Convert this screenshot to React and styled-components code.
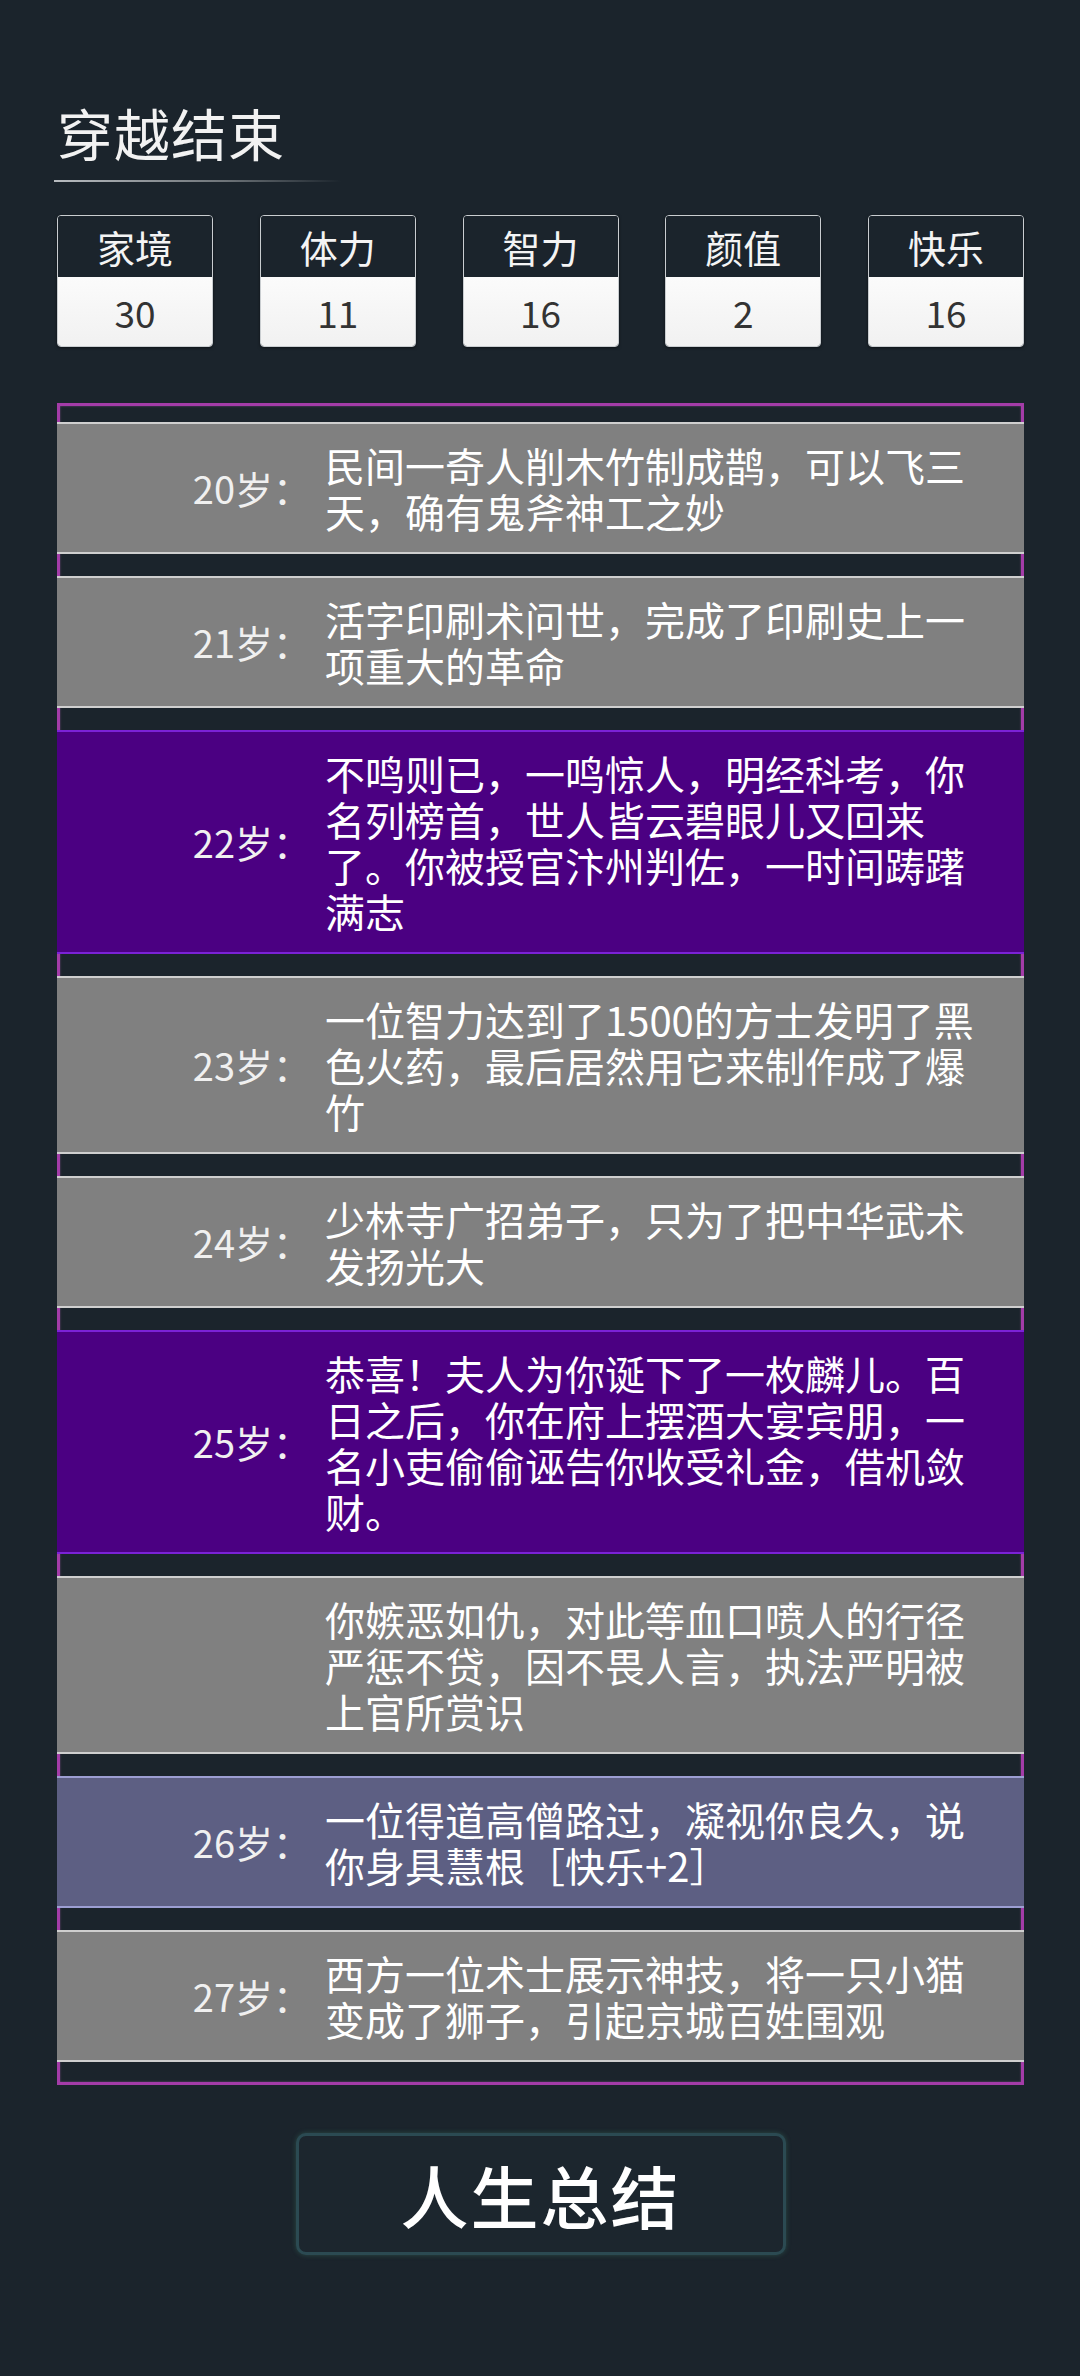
import React from 'react';
import styled, { createGlobalStyle } from 'styled-components';

const GlobalStyle = createGlobalStyle`
  html, body {
    margin: 0;
    padding: 0;
    background: #1b242c;
  }
  body {
    font-family: "Noto Sans CJK SC", "Noto Sans", sans-serif;
    color: #fff;
  }
`;

const Page = styled.div`
  min-height: 2376px;
  box-sizing: border-box;
  padding: 104px 56px 0 57px;
  display: flex;
  flex-direction: column;
`;

const Title = styled.h1`
  margin: 0;
  font-size: 56px;
  line-height: 1;
  font-weight: 400;
  color: #f2f2f2;
  letter-spacing: 1px;
`;

const TitleLine = styled.div`
  margin: 20px 0 0 -3px;
  width: 287px;
  height: 2px;
  background: linear-gradient(90deg, #b8bcc0 0%, #6d7378 60%, rgba(27, 36, 44, 0) 100%);
`;

const Stats = styled.div`
  margin-top: 33px;
  display: flex;
  justify-content: space-between;
`;

const StatCard = styled.div`
  width: 156px;
  height: 132px;
  box-sizing: border-box;
  border: 1.5px solid #c9cdd0;
  border-radius: 4px;
  overflow: hidden;
  display: flex;
  flex-direction: column;
  box-shadow: 0 1px 3px rgba(0, 0, 0, 0.5);
`;

const StatLabel = styled.div`
  height: 61px;
  display: flex;
  align-items: center;
  justify-content: center;
  background: #1b242c;
  color: #f4f4f4;
  font-size: 38px;
`;

const StatValue = styled.div`
  flex: 1;
  display: flex;
  align-items: center;
  justify-content: center;
  background: linear-gradient(180deg, #fbfbfb, #f1f1f1);
  color: #333;
  font-size: 37px;
`;

const List = styled.div`
  margin-top: 56px;
  border: 3px solid #a43ca8;
  box-shadow: inset 0 0 2px rgba(220, 120, 220, 0.5);
  padding: 16px 0 20px;
  display: flex;
  flex-direction: column;
  gap: 22px;
`;

const tones = {
  normal: { bg: '#808080', edge: '#cfcfcf' },
  rare: { bg: '#4b0082', edge: '#7b22d6' },
  good: { bg: '#5d5f83', edge: '#9c9ed2' },
};

const Item = styled.div`
  margin: 0 -3px;
  display: flex;
  align-items: center;
  padding: 18px 0;
  background: ${(p) => tones[p.$tone].bg};
  border-top: 2px solid ${(p) => tones[p.$tone].edge};
  border-bottom: 2px solid ${(p) => tones[p.$tone].edge};
`;

const Age = styled.div`
  flex: 0 0 254px;
  text-align: right;
  font-size: 38px;
  line-height: 46px;
  color: #f0f0f0;
  white-space: nowrap;
`;

const Text = styled.div`
  margin-left: 14px;
  width: 655px;
  font-size: 40px;
  line-height: 46px;
  color: #fff;
  line-break: strict;
`;

const Summary = styled.button`
  align-self: center;
  margin-top: 48px;
  width: 490px;
  height: 122px;
  box-sizing: border-box;
  background: #1c262e;
  border: 3px solid #2b4a52;
  border-radius: 10px;
  box-shadow: 0 0 5px rgba(70, 150, 120, 0.35);
  color: #fff;
  font-family: "Noto Sans CJK SC", sans-serif;
  font-size: 68px;
  font-weight: 500;
  letter-spacing: 2px;
  cursor: pointer;
`;

const stats = [
  { label: '家境', value: 30 },
  { label: '体力', value: 11 },
  { label: '智力', value: 16 },
  { label: '颜值', value: 2 },
  { label: '快乐', value: 16 },
];

const events = [
  { age: 20, tone: 'normal', text: '民间一奇人削木竹制成鹊，可以飞三天，确有鬼斧神工之妙' },
  { age: 21, tone: 'normal', text: '活字印刷术问世，完成了印刷史上一项重大的革命' },
  { age: 22, tone: 'rare', text: '不鸣则已，一鸣惊人，明经科考，你名列榜首，世人皆云碧眼儿又回来了。你被授官汴州判佐，一时间踌躇满志' },
  { age: 23, tone: 'normal', text: '一位智力达到了1500的方士发明了黑色火药，最后居然用它来制作成了爆竹' },
  { age: 24, tone: 'normal', text: '少林寺广招弟子，只为了把中华武术发扬光大' },
  { age: 25, tone: 'rare', text: '恭喜！夫人为你诞下了一枚麟儿。百日之后，你在府上摆酒大宴宾朋，一名小吏偷偷诬告你收受礼金，借机敛财。' },
  { age: null, tone: 'normal', text: '你嫉恶如仇，对此等血口喷人的行径严惩不贷，因不畏人言，执法严明被上官所赏识' },
  { age: 26, tone: 'good', text: '一位得道高僧路过，凝视你良久，说你身具慧根［快乐+2］' },
  { age: 27, tone: 'normal', text: '西方一位术士展示神技，将一只小猫变成了狮子，引起京城百姓围观' },
];

export default function App() {
  return (
    <>
      <GlobalStyle />
      <Page>
        <Title>穿越结束</Title>
        <TitleLine />
        <Stats>
          {stats.map((s) => (
            <StatCard key={s.label}>
              <StatLabel>{s.label}</StatLabel>
              <StatValue>{s.value}</StatValue>
            </StatCard>
          ))}
        </Stats>
        <List>
          {events.map((e, i) => (
            <Item key={i} $tone={e.tone}>
              <Age>{e.age !== null ? `${e.age}岁：` : ''}</Age>
              <Text>{e.text}</Text>
            </Item>
          ))}
        </List>
        <Summary>人生总结</Summary>
      </Page>
    </>
  );
}
